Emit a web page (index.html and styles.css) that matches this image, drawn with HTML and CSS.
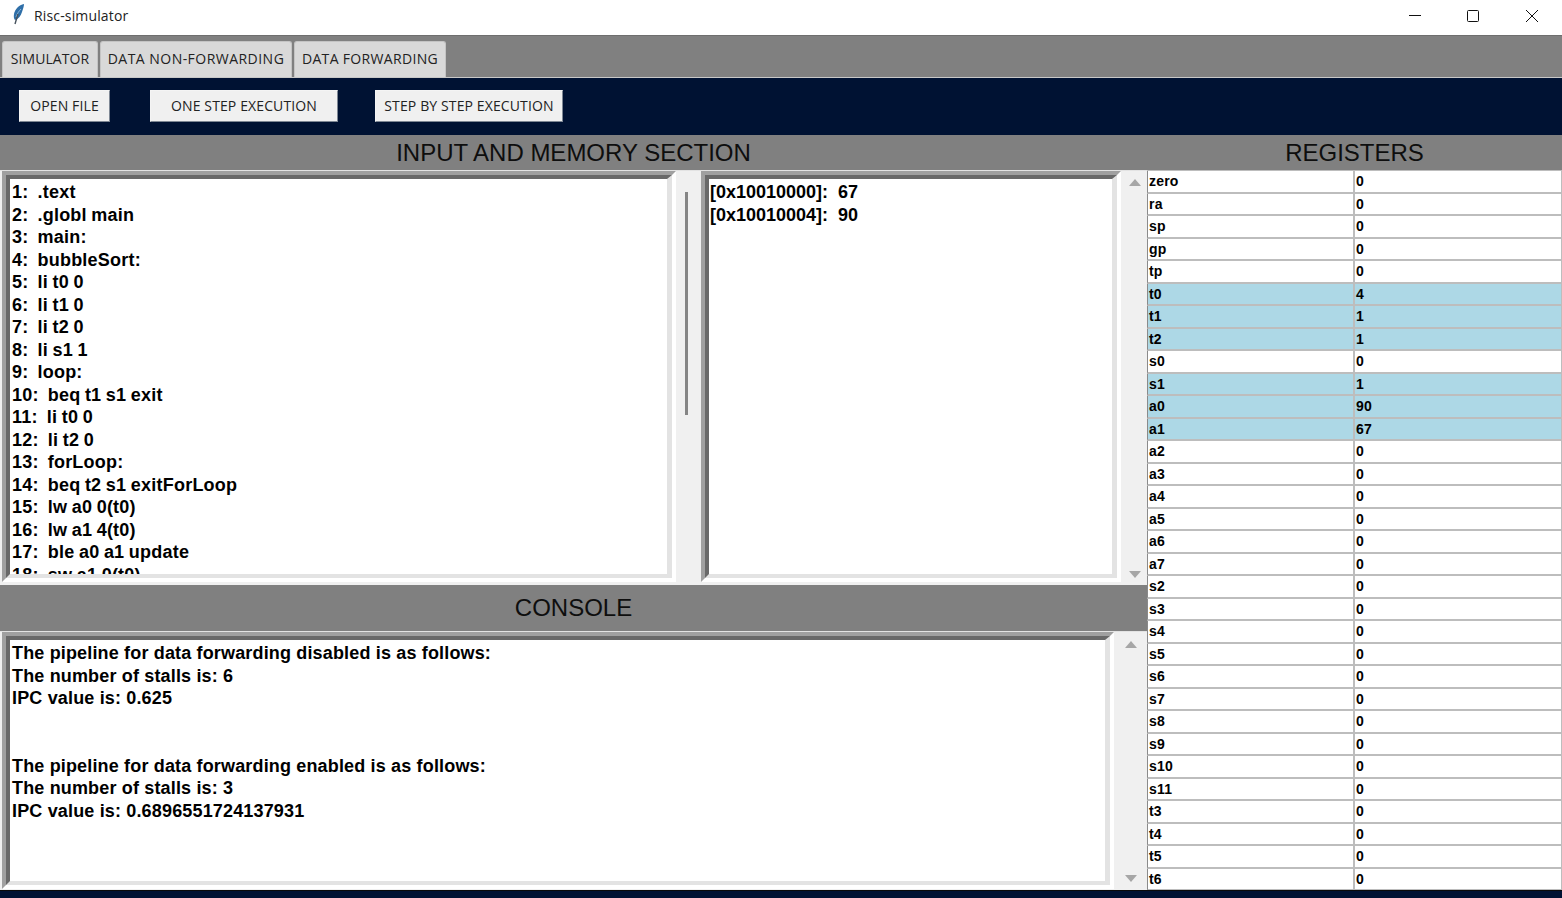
FILE: index.html
```html
<!DOCTYPE html>
<html lang="en">
<head>
<meta charset="utf-8">
<title>Risc-simulator</title>
<link rel="stylesheet" href="styles.css">
</head>
<body>
<div class="window">
  <header class="titlebar">
    <div class="title-left">
      <svg class="feather" width="16" height="24" viewBox="0 0 16 24"><path d="M13 1C8 2 4 6 3 11c-.5 3 0 5 1 6 3-1 6-4 7-8 1-3 2-6 2-8z" fill="#2f6fa8"/><path d="M10 6C8 8 6 11 5 14" stroke="#8fb6d8" fill="none"/><path d="M7 11L4 21" stroke="#46525e" stroke-width="1.4" fill="none"/></svg>
      <span class="title-text">Risc-simulator</span>
    </div>
    <div class="win-controls">
      <svg class="win-btn" width="58" height="30" viewBox="0 0 58 30"><path d="M23 15.5h12" stroke="#111" fill="none"/></svg>
      <svg class="win-btn" width="58" height="30" viewBox="0 0 58 30"><rect x="23.500" y="10.500" width="11" height="11" rx="1" stroke="#111" fill="none"/></svg>
      <svg class="win-btn" width="58" height="30" viewBox="0 0 58 30"><path d="M24 10l12 12M36 10L24 22" stroke="#111" fill="none"/></svg>
    </div>
  </header>
  <nav class="tabs">
    <div class="tab tab-sim">SIMULATOR</div>
    <div class="tab tab-non">DATA NON-FORWARDING</div>
    <div class="tab tab-fwd">DATA FORWARDING</div>
  </nav>
  <div class="toolbar">
    <button class="btn btn-open">OPEN FILE</button>
    <button class="btn btn-one">ONE STEP EXECUTION</button>
    <button class="btn btn-step">STEP BY STEP EXECUTION</button>
  </div>
  <main class="content">
    <section class="left">
      <h2 class="heading heading-input">INPUT AND MEMORY SECTION</h2>
      <div class="io-row">
        <div class="well well-code"><div class="well-inner"><pre class="mono-text code-text">1:  .text
2:  .globl main
3:  main:
4:  bubbleSort:
5:  li t0 0
6:  li t1 0
7:  li t2 0
8:  li s1 1
9:  loop:
10:  beq t1 s1 exit
11:  li t0 0
12:  li t2 0
13:  forLoop:
14:  beq t2 s1 exitForLoop
15:  lw a0 0(t0)
16:  lw a1 4(t0)
17:  ble a0 a1 update
18:  sw a1 0(t0)</pre></div></div>
        <div class="vscroll-mid"><div class="thumb"></div></div>
        <div class="well well-mem"><div class="well-inner well-inner-mem"><pre class="mono-text">[0x10010000]:  67
[0x10010004]:  90</pre></div></div>
        <div class="vscroll vscroll-io"><span class="arrow-up"></span><span class="arrow-down"></span></div>
      </div>
      <h2 class="heading heading-console">CONSOLE</h2>
      <div class="console-row">
        <div class="well well-console"><div class="well-inner"><pre class="mono-text console-text">The pipeline for data forwarding disabled is as follows:
The number of stalls is: 6
IPC value is: 0.625


The pipeline for data forwarding enabled is as follows:
The number of stalls is: 3
IPC value is: 0.6896551724137931</pre></div></div>
        <div class="vscroll"><span class="arrow-up"></span><span class="arrow-down"></span></div>
      </div>
    </section>
    <section class="right">
      <h2 class="heading heading-reg">REGISTERS</h2>
      <div class="reg-table">
        <div class="reg">zero</div><div class="reg">0</div>
        <div class="reg">ra</div><div class="reg">0</div>
        <div class="reg">sp</div><div class="reg">0</div>
        <div class="reg">gp</div><div class="reg">0</div>
        <div class="reg">tp</div><div class="reg">0</div>
        <div class="reg hl">t0</div><div class="reg hl">4</div>
        <div class="reg hl">t1</div><div class="reg hl">1</div>
        <div class="reg hl">t2</div><div class="reg hl">1</div>
        <div class="reg">s0</div><div class="reg">0</div>
        <div class="reg hl">s1</div><div class="reg hl">1</div>
        <div class="reg hl">a0</div><div class="reg hl">90</div>
        <div class="reg hl">a1</div><div class="reg hl">67</div>
        <div class="reg">a2</div><div class="reg">0</div>
        <div class="reg">a3</div><div class="reg">0</div>
        <div class="reg">a4</div><div class="reg">0</div>
        <div class="reg">a5</div><div class="reg">0</div>
        <div class="reg">a6</div><div class="reg">0</div>
        <div class="reg">a7</div><div class="reg">0</div>
        <div class="reg">s2</div><div class="reg">0</div>
        <div class="reg">s3</div><div class="reg">0</div>
        <div class="reg">s4</div><div class="reg">0</div>
        <div class="reg">s5</div><div class="reg">0</div>
        <div class="reg">s6</div><div class="reg">0</div>
        <div class="reg">s7</div><div class="reg">0</div>
        <div class="reg">s8</div><div class="reg">0</div>
        <div class="reg">s9</div><div class="reg">0</div>
        <div class="reg">s10</div><div class="reg">0</div>
        <div class="reg">s11</div><div class="reg">0</div>
        <div class="reg">t3</div><div class="reg">0</div>
        <div class="reg">t4</div><div class="reg">0</div>
        <div class="reg">t5</div><div class="reg">0</div>
        <div class="reg">t6</div><div class="reg">0</div>
      </div>
    </section>
  </main>
  <div class="footer-strip"></div>
</div>
</body>
</html>
```
FILE: styles.css
```css
* { box-sizing: border-box; }
html, body { margin: 0; padding: 0; height: 100%; overflow: hidden; background: #fff; }
.window { width: 1562px; height: 898px; display: flex; flex-direction: column; font-family: "Liberation Sans", Arial, sans-serif; }

.titlebar { height: 36px; padding-bottom: 5px; background: #fff; display: flex; justify-content: space-between; align-items: center; border-bottom: 1px solid #6e6e6e; flex: none; }
.title-left { display: flex; align-items: center; padding-left: 11px; }
.feather { margin-right: 7px; }
.title-text { font-family: "Open Sans", sans-serif; font-size: 14px; letter-spacing: .15px; color: #222; }
.win-controls { display: flex; padding-right: 2px; }
.win-btn { display: block; }

.tabs { height: 42px; background: #808080; display: flex; align-items: flex-end; gap: 2px; padding-left: 2px; border-bottom: 1px solid #c8c8c8; flex: none; }
.tab { height: 36px; padding-bottom: 2px; background: #d9d9d9; border-radius: 3px 3px 0 0; border: 1px solid #c4c4c4; border-bottom: 0; display: flex; align-items: center; justify-content: center; font-family: "Open Sans", sans-serif; font-size: 14px; color: #222; white-space: nowrap; }
.tab-sim { width: 96px; letter-spacing: .1px; }
.tab-non { width: 192px; letter-spacing: .47px; }
.tab-fwd { width: 152px; letter-spacing: .33px; }

.toolbar { height: 57px; background: #001233; display: flex; align-items: flex-start; padding: 12px 0 0 19px; flex: none; }
.btn { height: 32px; background: #f0f0f0; border: 1px solid #f4f4f4; border-right-color: #7e8794; border-bottom-color: #7e8794; border-radius: 0; padding: 0 0 2px; font-family: "Open Sans", sans-serif; font-size: 14px; letter-spacing: .12px; color: #222; white-space: nowrap; }
.btn-open { width: 91px; }
.btn-one { width: 188px; margin-left: 40px; }
.btn-step { width: 188px; margin-left: 37px; }

.content { flex: none; height: 755px; display: grid; grid-template-columns: 1147px 415px; }
.left { display: flex; flex-direction: column; min-width: 0; }
.right { display: flex; flex-direction: column; min-width: 0; }

.heading { margin: 0; background: #808080; font-weight: 400; font-size: 24px; color: #0e0e0e; display: flex; align-items: center; justify-content: center; flex: none; }
.heading-input, .heading-reg { height: 35px; }
.heading-console { height: 46px; }

.io-row { height: 415px; display: flex; flex: none; background: #f0f0f0; border-top: 1px solid #e3e3e3; padding: 0 0 3px 2px; }
.console-row { height: 259px; display: flex; flex: none; background: #f0f0f0; border-top: 1px solid #e3e3e3; padding: 0 0 1px 2px; }

.well { height: 100%; flex: none; border: 4px solid #a0a0a0; border-right-color: #fff; border-bottom-color: #fff; background: #fff; }
.well-inner { height: 100%; border: 4px solid #696969; border-right: 5px solid #e3e3e3; border-bottom-color: #e3e3e3; background: #fff; overflow: hidden; padding: 2px 0 0 2px; }
.well-inner-mem { padding-left: 1px; }
.well-code { width: 674px; }
.well-mem { width: 420px; }
.well-console { width: 1112px; }

.mono-text { margin: 0; font-family: "Liberation Sans", Arial, sans-serif; font-weight: 700; font-size: 18px; line-height: 22.5px; color: #000; white-space: pre; }
.code-text { letter-spacing: .22px; word-spacing: -.7px; }
.console-text { letter-spacing: .16px; }

.vscroll-mid { width: 25px; flex: none; background: #f0f0f0; }
.thumb { width: 3px; height: 223px; margin: 21px 0 0 9px; background: #858585; }
.vscroll { flex: 1; background: #f0f0f0; display: flex; flex-direction: column; justify-content: space-between; align-items: center; padding: 9px 0 7px; }
.vscroll-io { padding: 8px 0 4px 2px; }
.arrow-up { width: 0; height: 0; border-left: 6px solid transparent; border-right: 6px solid transparent; border-bottom: 7px solid #a6a6a6; }
.arrow-down { width: 0; height: 0; border-left: 6px solid transparent; border-right: 6px solid transparent; border-top: 7px solid #a6a6a6; }

.reg-table { height: 720px; overflow: hidden; display: grid; grid-template-columns: 207px 208px; grid-auto-rows: 22.5px; align-content: start; background: #fff; border-top: 1px solid #bdbdbd; }
.reg { font-family: "Liberation Sans", Arial, sans-serif; font-weight: 700; font-size: 14px; letter-spacing: .2px; line-height: 20px; color: #000; padding-left: 1px; background: #fff; border-bottom: 2px solid #bdbdbd; }
.reg:nth-child(odd) { border-left: 1px solid #8a8a8a; border-right: 1px solid #bdbdbd; }
.reg:nth-child(even) { border-left: 1px solid #bdbdbd; border-right: 1px solid #bdbdbd; }
.reg-table .hl { background: #add8e6; }

.footer-strip { flex: 1; background: #001233; border-top: 1px solid #0a0a0a; }
```
